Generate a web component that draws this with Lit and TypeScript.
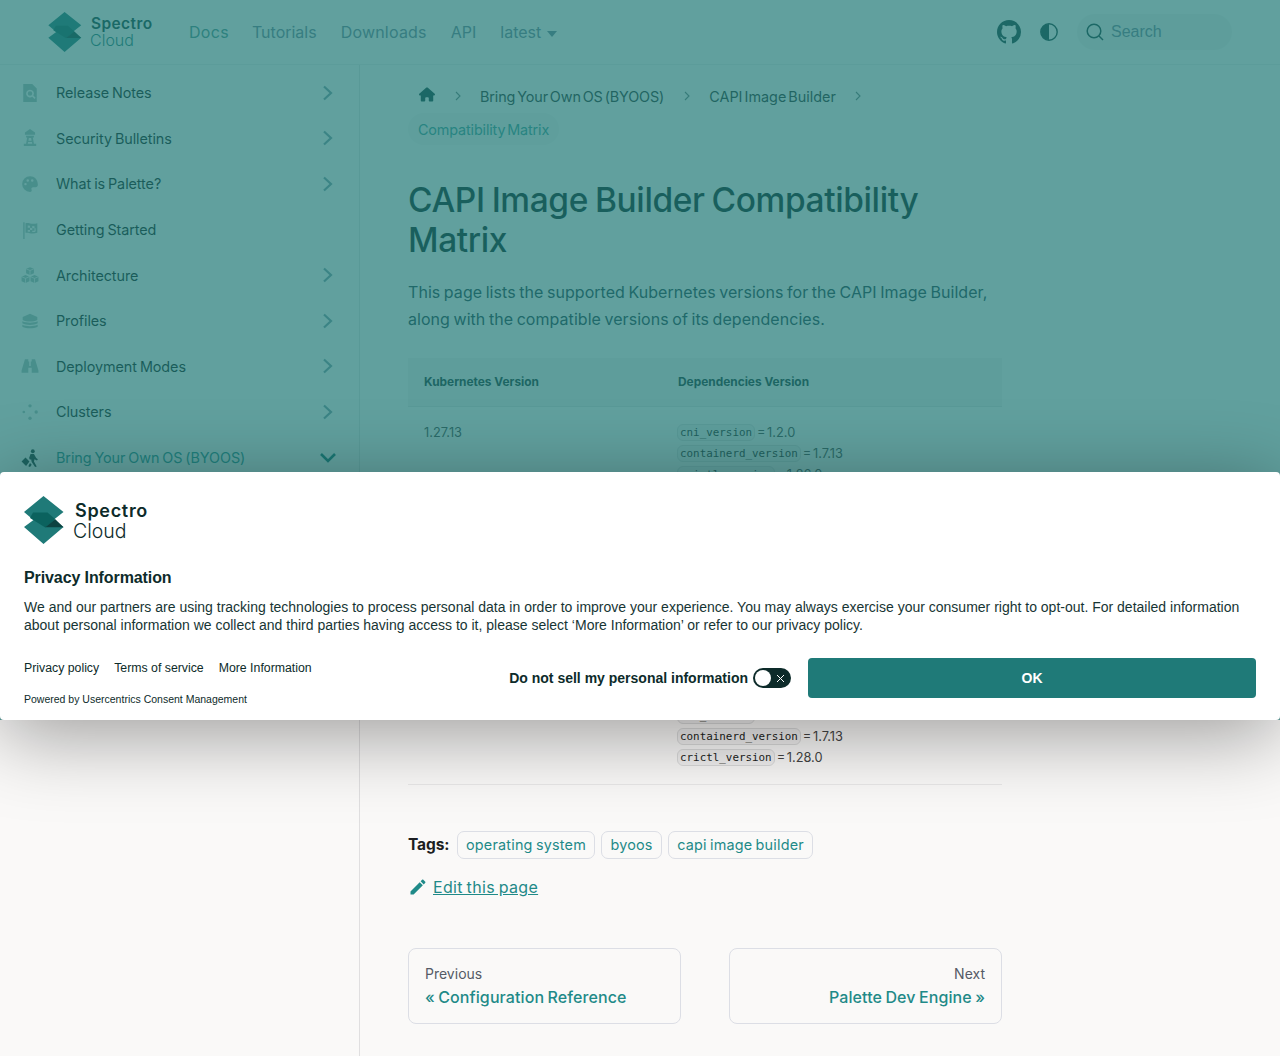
import { LitElement, html, css, svg } from "lit";
import { customElement } from "lit/decorators.js";

const logo = (cls: string) => html`<svg class=${cls} viewBox="0 0 40 48" aria-hidden="true">
  <path fill="#1f7a78" d="M19.5 0L39.5 16 30 23.5 39.5 31 19.5 48 0 31 9.5 24 0 16z"/>
  <path fill="#0b625e" d="M9 16.5H23.5L31.3 23.3 21.3 31.5 6 22z"/>
  <path fill="#0d4341" d="M31.3 23.3L39.5 31.3H21.3z"/>
</svg>`;

const I: Record<string, unknown> = {
  file: svg`<path fill-rule="evenodd" d="M2 0H10L14 4V16H2zM8 5a3.5 3.5 0 102 6.4L12 13.4 13 12.3 11 10.3A3.5 3.5 0 008 5zM8 6.5a2 2 0 110 4 2 2 0 010-4z"/>`,
  tower: svg`<path d="M8 0L12.5 3V5H3.5V3zM4.5 6H11.5V7.5H10.5L11.5 13H13.5V15H2.5V13H4.5L5.5 7.5H4.5zM7 8L6.6 10.5H9.4L9 8zM6.3 11.5L6 13H10L9.7 11.5z"/>`,
  palette: svg`<path fill-rule="evenodd" d="M8 1a7 7 0 000 14c1.4 0 1.8-1 1.4-2-.5-1.2.2-2.2 1.4-2.2H13c1.2 0 2-.8 2-2.2C15 4 12 1 8 1zM4 7a1.1 1.1 0 110 2.200A1.100 1.100 0 014 7zM6 3.800a1.100 1.100 0 110 2.200 1.100 1.100 0 010-2.200zM10 3.800a1.100 1.100 0 110 2.200 1.100 1.100 0 010-2.200z"/>`,
  flag: svg`<path fill-rule="evenodd" d="M2 1H3.200V16H2zM4 2C7 1 9 3.400 14.500 2V10.500C9 12 7 9.800 4 10.500zM6 4V6H8V4.300zM10 4.500V6.500H12V4.600zM8 6V8H10V6.500zM6 8V9.600H8V8zM12 6.500V8.600H10V9.800H12.300L13 9V6.500z"/>`,
  cubes: svg`<path d="M8 1L11.500 2.500V6.500L8 8 4.500 6.500V2.500zM4 8L7.500 9.500V13.500L4 15 .5 13.500V9.500zM12 8L15.500 9.500V13.500L12 15 8.500 13.500V9.500z"/><path fill="none" stroke="#faf8f7" stroke-width=".7" d="M4.500 2.500L8 4 11.500 2.500M8 4V8M.5 9.500L4 11 7.500 9.500M4 11V15M8.500 9.500L12 11 15.500 9.500M12 11V15"/>`,
  layers: svg`<path d="M8 1.500L14.500 4.500V7C11 8.800 5 8.800 1.500 7V4.500zM1.200 8.300C5 10 11 10 14.800 8.300V10C11 12 5 12 1.200 10zM1.200 11.300C5 13 11 13 14.800 11.300V13C11 15 5 15 1.200 13z"/>`,
  binoculars: svg`<path d="M3.500 2H6.500V4H7.300V8H8.700V4H9.500V2H12.500L15.500 12V14H9.500V9.500H6.500V14H.5V12z"/>`,
  nodes: svg`<circle cx="8" cy="2.500" r="1.500"/><circle cx="2.500" cy="8" r="1.200"/><circle cx="13.500" cy="8" r="1.500"/><circle cx="8" cy="13.500" r="1.500"/>`,
  walk: svg`<circle cx="10.500" cy="2" r="1.700"/><path d="M8.500 4.500L11.500 4.500 13.500 8 15 9 14.200 10.200 12 9 11.500 11 14 15.500 12.500 16 9.500 11.500 9 9 8 9.500 7.200 8zM.5 11L4 7.500 7.500 11 4.500 15zM8 12.500L9.500 14 8 16 6.500 15.300z"/>`,
};

const side = [
  ["file", "Release Notes", 1], ["tower", "Security Bulletins", 1], ["palette", "What is Palette?", 1],
  ["flag", "Getting Started", 0], ["cubes", "Architecture", 1], ["layers", "Profiles", 1],
  ["binoculars", "Deployment Modes", 1], ["nodes", "Clusters", 1],
] as const;

const rows = [
  ["1.27.13", "1.2.0", "1.7.13", "1.26.0", false],
  ["1.27.13", "1.2.0", "1.7.13", "1.27.0", true],
  ["1.28.9", "1.2.0", "1.7.13", "1.27.0", true],
  ["1.29.4", "1.2.0", "1.7.13", "1.28.0", false],
] as const;

@customElement("app-root")
export class AppRoot extends LitElement {
  static styles = css`
    :host { display: block; position: relative; height: 1056px; overflow: hidden; background: #faf9f8; color: #1c1e21;
      font-family: Inter, "Noto Sans", sans-serif; }
    * { box-sizing: border-box; }
    a { color: inherit; text-decoration: none; }
    svg { display: block; flex: none; }
    .nav { height: 65px; display: flex; align-items: center; border-bottom: 1px solid #eceaea; padding-left: 48px; }
    .mark { width: 34px; height: 40px; }
    .word { display: flex; flex-direction: column; font-family: Inter, sans-serif; }
    .word b { font-weight: 600; }
    .word span { font-weight: 300; }
    .nav .word { width: 99px; margin: -1px 0 0 8px; line-height: 17px; color: #1f7a78; }
    .nav .word b { color: #10403f; margin-left: 1px; font-size: 15.500px; letter-spacing: .4px; }
    .nav .word span { font-size: 16px; }
    .links { display: flex; gap: 24px; font-size: 16px; color: #6f8496; word-spacing: -1px; }
    .links a:first-child { color: #50908f; letter-spacing: .3px; margin-right: -1px; }
    .links a:nth-child(3) { letter-spacing: .2px; }
    .caret { display: inline-block; margin-left: 6px; border: 5.500px solid transparent; border-top: 6.500px solid #6f8496; border-bottom: 0; vertical-align: 1px; }
    .right { margin-left: auto; display: flex; align-items: center; padding-right: 48px; color: #143d3c; }
    .gh { width: 24px; height: 24px; margin-right: 19px; }
    .half { width: 18px; height: 18px; margin-right: 19px; }
    .search { width: 155px; height: 36px; border-radius: 18px; background: #f1efee; display: flex; align-items: center; padding-left: 9px; gap: 7px;
      font: 16px "Liberation Sans", sans-serif; color: #6f8496; }
    .search svg { width: 18px; height: 18px; }
    .body { display: flex; }
    aside { width: 360px; flex: none; height: 991px; border-right: 1px solid #e0dfe0; padding-top: 5px; }
    .item { height: 45.6px; display: flex; align-items: center; padding: 0 22px 0 21px; color: #111615; font-size: 14.4px; letter-spacing: -.08px; word-spacing: -1px; }
    .item .ic { width: 18px; height: 18px; margin-right: 17px; color: #a9bbba; }
    .item .ch { margin-left: auto; width: 14px; height: 16px; color: #7d9aa5; margin-right: 2px; }
    .item.open { color: #1f8a88; padding-right: 22px; }
    .item.open .ic { color: #1a2f2e; }
    .item.open .ch { color: #0f6f6c; width: 18px; height: 14px; margin-right: 0; }
    main { width: 594px; margin-left: 48px; padding-top: 15px; }
    .crumbs { display: flex; flex-wrap: wrap; align-items: center; font-size: 14.4px; color: #2a3231; word-spacing: -2px; }
    .crumbs a, .crumbs .here { height: 32px; display: flex; align-items: center; padding: 0 10px; }
    .crumbs a.long { letter-spacing: -.12px; }
    .crumbs .home { width: 38px; padding: 0 11px; }
    .crumbs svg.h { width: 16px; height: 15px; color: #123f3e; margin-top: -4px; }
    .crumbs .sep { width: 6px; height: 10px; margin: 0 9.500px; color: #6d7d7d; }
    .crumbs .sep.first { margin-left: 9px; margin-right: 9px; }
    .here { color: #3d9a98; background: #f3f1f0; border-radius: 16px; margin-top: 1px; letter-spacing: -.15px; }
    h1 { margin: 35px 0 0; font-size: 33.500px; line-height: 40px; font-weight: 500; color: #0a1f1f; letter-spacing: -.4px; word-spacing: -1.500px; }
    .lead { margin: 19px 0 0; font-size: 16px; line-height: 27px; color: #22404a; letter-spacing: .05px; word-spacing: -1px; }
    table { margin-top: 25px; width: 594px; border-collapse: collapse; font-size: 12.8px; table-layout: fixed; }
    th { height: 48px; text-align: left; background: #f0eeed; padding: 0 16px; font-weight: 700; color: #193534; border-bottom: 1px solid #e2e1e1; font-size: 11.900px; }
    th:first-child { width: 254px; }
    td { height: 94.5px; vertical-align: top; padding: 15px 16px 0; border-bottom: 1px solid #e9e8e8; color: #444; }
    td:first-child { padding-top: 18px; }
    .covered { visibility: hidden; }
    .dep { height: 21px; display: flex; align-items: center; gap: 1px; font-size: 12.800px; word-spacing: -2px; white-space: nowrap; }
    code { font: 10.88px "DejaVu Sans Mono", monospace; border: 1px solid #dcdcdc; background: #f2f1f1; border-radius: 6px; padding: 1px 2px; color: #1c1e21; margin-left: -1px; margin-right: 1px; }
    .tags { margin-top: 46px; display: flex; align-items: center; }
    .tags b { width: 49px; font-size: 15.500px; font-weight: 700; color: #1c1e21; letter-spacing: -.1px; }
    .tags a { height: 28px; display: flex; align-items: center; padding: 0 8px; margin-right: 6.500px; border: 1px solid #dcdee5; border-radius: 7px; font-size: 14.4px; color: #1f8a88; letter-spacing: .2px; word-spacing: -1px; }
    .edit { margin-top: 14px; height: 28px; display: flex; align-items: center; gap: 5px; color: #1f8a88; font-size: 16px; }
    .edit svg { width: 20px; height: 20px; }
    .edit a { text-decoration: underline; letter-spacing: .32px; word-spacing: -1px; }
    .pager { margin-top: 47px; display: grid; grid-template-columns: 273px 273px; gap: 48px; }
    .card { height: 76px; border: 1px solid #dcdee5; border-radius: 8px; padding: 15px 16px; display: flex; flex-direction: column; gap: 3px; font-size: 14px; color: #555b66; line-height: 19px; }
    .card.next { align-items: flex-end; }
    .card strong { font-size: 16px; font-weight: 450; color: #1f8a88; line-height: 22px; letter-spacing: .1px; word-spacing: -1px; }
    .overlay { position: absolute; left: 0; top: 0; width: 100%; height: 720px; background: rgba(31,122,120,.7); }
    .banner { position: absolute; left: 0; top: 472px; width: 1280px; height: 248px; background: #fff; border-radius: 4px; box-shadow: 0 15px 80px rgba(0,0,0,.38);
      padding: 24px; font-family: "Liberation Sans", Arial, sans-serif; color: #0d2b2a; display: flex; flex-direction: column; }
    .blogo { display: flex; height: 48px; align-items: center; gap: 9px; }
    .blogo .mark { width: 40px; height: 48px; }
    .banner .word { line-height: 20px; margin-top: 1px; }
    .banner .word b { margin-left: 2px; font-size: 18px; letter-spacing: .7px; }
    .banner .word span { font-size: 19.500px; }
    h2 { margin: 25px 0 0; font-size: 16px; line-height: 18px; font-weight: 700; letter-spacing: -.1px; }
    .msg { margin: 11px 0 0; font-size: 14px; line-height: 18px; color: #173534; }
    .foot { margin-top: 24px; display: flex; }
    .fl { flex: none; }
    .ll { display: flex; gap: 15px; font-size: 12.300px; line-height: 20px; }
    .pw { font-size: 10.500px; line-height: 14px; margin-top: 14px; }
    .fr { margin-left: auto; display: flex; align-items: center; gap: 17px; height: 40px; }
    .sell { display: flex; align-items: center; gap: 5px; font-size: 14px; font-weight: 700; }
    .tg { width: 38px; height: 20px; border-radius: 10px; background: #0d2b2a; position: relative; }
    .tg i { position: absolute; left: 2px; top: 2px; width: 16px; height: 16px; border-radius: 50%; background: #fff; }
    .tg svg { position: absolute; right: 6px; top: 5.500px; width: 9px; height: 9px; }
    .ok { width: 448px; height: 40px; border: 0; border-radius: 4px; background: #1f7a78; color: #fff; font: 700 14px "Liberation Sans", sans-serif; }
  `;

  render() {
    const chev = html`<svg class="ch" viewBox="0 0 14 16"><path d="M3 1.500L10 8 3 14.500" fill="none" stroke="currentColor" stroke-width="2.200"/></svg>`;
    const sep = html`<svg class="sep" viewBox="0 0 6 10"><path d="M1 1L5 5 1 9" fill="none" stroke="currentColor" stroke-width="1.100"/></svg>`;
    return html`
      <header class="nav">
        ${logo("mark")}
        <div class="word"><b>Spectro</b><span>Cloud</span></div>
        <nav class="links">
          <a>Docs</a><a>Tutorials</a><a>Downloads</a><a>API</a><a>latest<i class="caret"></i></a>
        </nav>
        <div class="right">
          <svg class="gh" viewBox="0 0 16 16"><path fill="currentColor" d="M8 0C3.58 0 0 3.58 0 8c0 3.54 2.29 6.53 5.47 7.59.4.07.55-.17.55-.38 0-.19-.01-.82-.01-1.49-2.01.37-2.53-.49-2.69-.94-.09-.23-.48-.94-.82-1.13-.28-.15-.68-.52-.01-.53.63-.01 1.08.58 1.23.82.72 1.21 1.87.87 2.33.66.07-.52.28-.87.51-1.07-1.78-.2-3.64-.89-3.64-3.95 0-.87.31-1.59.82-2.15-.08-.2-.36-1.02.08-2.12 0 0 .67-.21 2.2.82.64-.18 1.32-.27 2-.27.68 0 1.36.09 2 .27 1.53-1.04 2.2-.82 2.2-.82.44 1.1.16 1.92.08 2.12.51.56.82 1.27.82 2.15 0 3.07-1.87 3.75-3.65 3.95.29.25.54.73.54 1.48 0 1.07-.01 1.93-.01 2.2 0 .21.15.46.55.38A8.013 8.013 0 0016 8c0-4.42-3.58-8-8-8z"/></svg>
          <svg class="half" viewBox="0 0 18 18"><circle cx="9" cy="9" r="8.200" fill="none" stroke="currentColor" stroke-width="1.400"/><path fill="currentColor" d="M9 1A8 8 0 009 17z"/></svg>
          <div class="search"><svg viewBox="0 0 18 18"><circle cx="8" cy="8" r="6.800" fill="none" stroke="#143d3c" stroke-width="1.500"/><path d="M13 13L17 17" stroke="#143d3c" stroke-width="1.500"/></svg>Search</div>
        </div>
      </header>
      <div class="body">
        <aside>
          ${side.map(([ic, label, more]) => html`<a class="item"><svg class="ic" viewBox="0 0 16 16" fill="currentColor">${I[ic]}</svg>${label}${more ? chev : ""}</a>`)}
          <a class="item open"><svg class="ic" viewBox="0 0 16 16" fill="currentColor">${I.walk}</svg>Bring Your Own OS (BYOOS)<svg class="ch" viewBox="0 0 18 14"><path d="M2 3L9 10 16 3" fill="none" stroke="currentColor" stroke-width="2.600"/></svg></a>
        </aside>
        <main>
          <nav class="crumbs">
            <a class="home"><svg class="h" viewBox="0 0 576 512"><path fill="currentColor" d="M575.8 255.5c0 18-15 32.100-32 32.100h-32l.7 160.200c0 2.700-.2 5.400-.5 8.100V472c0 22.100-17.900 40-40 40H456c-1.100 0-2.200 0-3.300-.1c-1.400.1-2.800.1-4.200.1H416 392c-22.100 0-40-17.900-40-40V448 384c0-17.700-14.300-32-32-32H256c-17.700 0-32 14.300-32 32v64 24c0 22.100-17.900 40-40 40H160 128.100c-1.500 0-3-.1-4.500-.2c-1.200.1-2.400.2-3.600.2H104c-22.100 0-40-17.900-40-40V360c0-.9 0-1.900 .1-2.800V287.600H32c-18 0-32-14-32-32.100c0-9 3-17 10-24L266.400 8c7-7 15-8 22-8s15 2 21 7L564.800 231.500c8 7 12 15 11 24z"/></svg></a>
            <svg class="sep first" viewBox="0 0 6 10"><path d="M1 1L5 5 1 9" fill="none" stroke="currentColor" stroke-width="1.100"/></svg>
            <a class="long">Bring Your Own OS (BYOOS)</a>${sep}
            <a>CAPI Image Builder</a>${sep}
            <span class="here">Compatibility Matrix</span>
          </nav>
          <h1>CAPI Image Builder Compatibility Matrix</h1>
          <p class="lead">This page lists the supported Kubernetes versions for the CAPI Image Builder, along with the compatible versions of its dependencies.</p>
          <table>
            <thead><tr><th>Kubernetes Version</th><th>Dependencies Version</th></tr></thead>
            <tbody>
              ${rows.map(([k, a, b, c, hid]) => html`<tr class=${hid ? "covered" : ""}><td>${k}</td><td>
                <div class="dep"><code>cni_version</code>= ${a}</div>
                <div class="dep"><code>containerd_version</code>= ${b}</div>
                <div class="dep"><code>crictl_version</code>= ${c}</div>
              </td></tr>`)}
            </tbody>
          </table>
          <div class="tags"><b>Tags:</b><a>operating system</a><a>byoos</a><a>capi image builder</a></div>
          <div class="edit"><svg viewBox="0 0 24 24"><path fill="currentColor" d="M3 17.250V21h3.750L17.810 9.940l-3.750-3.750L3 17.250zM20.710 7.040c.39-.39.39-1.020 0-1.410l-2.340-2.340c-.39-.39-1.020-.39-1.410 0l-1.830 1.830 3.750 3.750 1.830-1.830z"/></svg><a>Edit this page</a></div>
          <div class="pager">
            <a class="card">Previous<strong>« Configuration Reference</strong></a>
            <a class="card next">Next<strong>Palette Dev Engine »</strong></a>
          </div>
        </main>
      </div>
      <div class="overlay"></div>
      <section class="banner">
        <div class="blogo">${logo("mark")}<div class="word"><b>Spectro</b><span>Cloud</span></div></div>
        <h2>Privacy Information</h2>
        <p class="msg">We and our partners are using tracking technologies to process personal data in order to improve your experience. You may always exercise your consumer right to opt-out. For detailed information about personal information we collect and third parties having access to it, please select ‘More Information’ or refer to our privacy policy.</p>
        <div class="foot">
          <div class="fl">
            <div class="ll"><a>Privacy policy</a><a>Terms of service</a><a>More Information</a></div>
            <div class="pw">Powered by Usercentrics Consent Management</div>
          </div>
          <div class="fr">
            <div class="sell">Do not sell my personal information
              <span class="tg"><i></i><svg viewBox="0 0 9 9"><path d="M1 1L8 8M8 1L1 8" stroke="#fff" stroke-width="1"/></svg></span>
            </div>
            <button class="ok">OK</button>
          </div>
        </div>
      </section>
    `;
  }
}
